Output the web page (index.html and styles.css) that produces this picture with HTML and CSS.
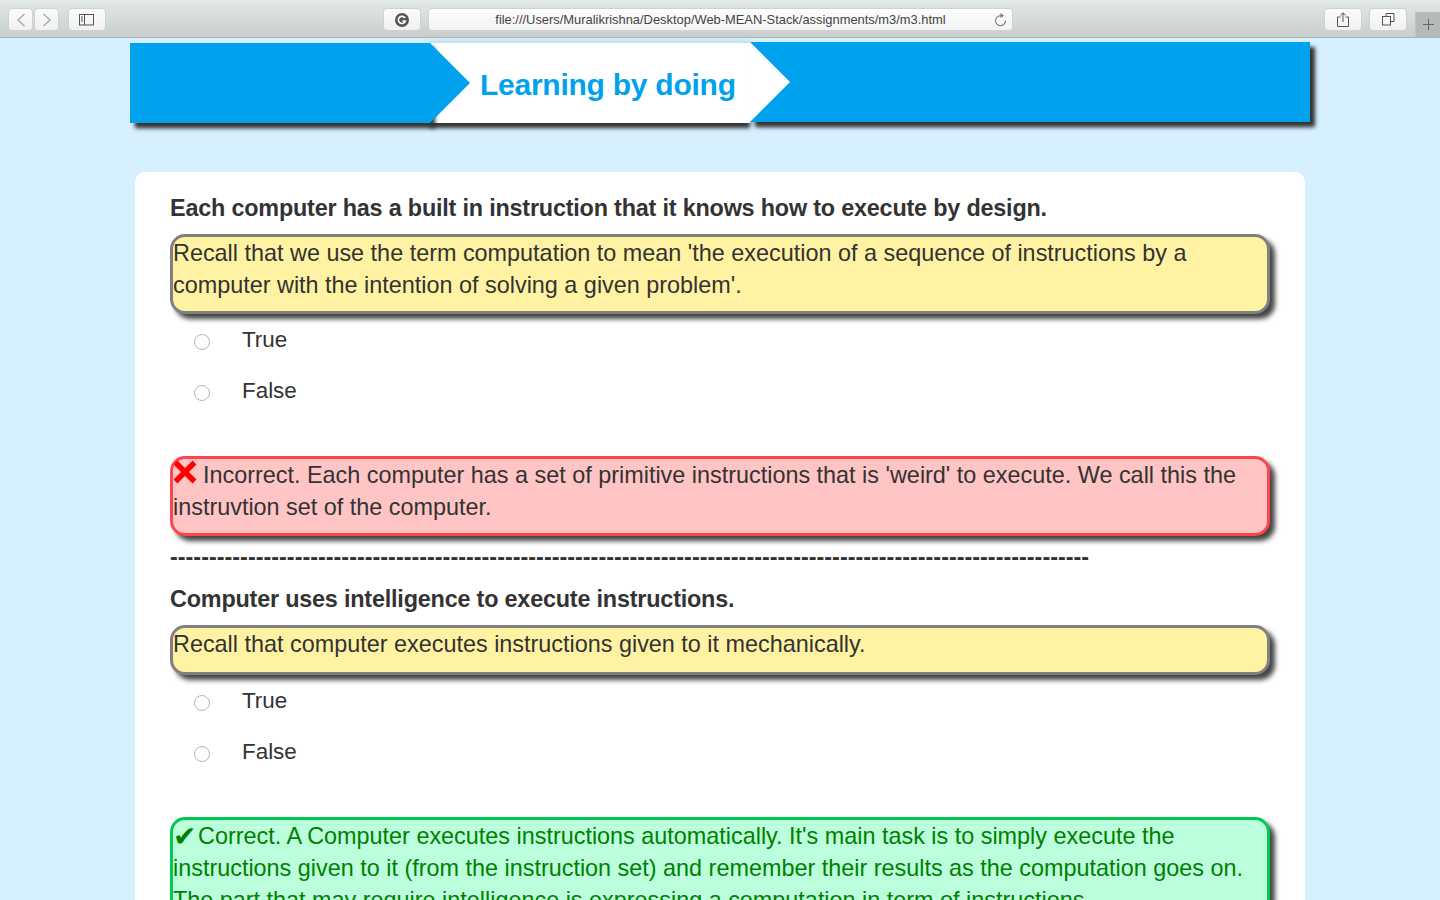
FILE: index.html
```html
<!DOCTYPE html>
<html>
<head lang="en">
    <meta charset="UTF-8">
    <title>Learning by doing</title>
    <link rel="stylesheet" href="styles.css">
</head>
<body>
    <div class="toolbar">
        <div class="tool-group">
            <span class="tool-btn nav-btn">
                <svg width="12" height="16" viewBox="0 0 12 16"><path d="M9.5 2 L3 8 L9.5 14" fill="none" stroke="#a9a9a9" stroke-width="1.4"/></svg>
            </span>
            <span class="tool-btn nav-btn">
                <svg width="12" height="16" viewBox="0 0 12 16"><path d="M2.5 2 L9 8 L2.5 14" fill="none" stroke="#a9a9a9" stroke-width="1.4"/></svg>
            </span>
        </div>
        <span class="tool-btn wide-btn sidebar-btn">
            <svg width="16" height="12" viewBox="0 0 16 12"><rect x="0.5" y="0.5" width="14" height="10.5" fill="none" stroke="#555" stroke-width="1"/><path d="M5.5 0.5 V11" stroke="#555" stroke-width="1"/><path d="M2 3 H4 M2 5 H4 M2 7 H4" stroke="#555" stroke-width="1"/></svg>
        </span>
        <span class="tool-btn wide-btn grammarly-btn">
            <svg width="14" height="14" viewBox="0 0 14 14"><circle cx="7" cy="7" r="7" fill="#555"/><path d="M10 5 A3.6 3.6 0 1 0 10.4 8 H7.4" fill="none" stroke="#fff" stroke-width="1.6"/></svg>
        </span>
        <div class="url-bar">
            <span class="url-text">file:///Users/Muralikrishna/Desktop/Web-MEAN-Stack/assignments/m3/m3.html</span>
            <svg class="reload" width="13" height="14" viewBox="0 0 13 14"><path d="M7.5 2.8 A5 5 0 1 0 11.5 7.5" fill="none" stroke="#777" stroke-width="1.1"/><path d="M6.5 0 L10 2.8 L6.5 5 Z" fill="#777"/></svg>
        </div>
        <span class="tool-btn wide-btn share-btn">
            <svg width="12" height="15" viewBox="0 0 12 15"><path d="M3.5 5 H0.5 V14.5 H11.5 V5 H8.5" fill="none" stroke="#555" stroke-width="1"/><path d="M6 10 V1 M3.5 3.2 L6 0.8 L8.5 3.2" fill="none" stroke="#555" stroke-width="1"/></svg>
        </span>
        <span class="tool-btn wide-btn tabs-btn">
            <svg width="13" height="13" viewBox="0 0 13 13"><rect x="0.5" y="3.5" width="8" height="8.5" fill="none" stroke="#555" stroke-width="1"/><path d="M4 3 V0.5 H12 V8.5 H9" fill="none" stroke="#555" stroke-width="1"/></svg>
        </span>
        <span class="new-tab">
            <svg width="11" height="11" viewBox="0 0 11 11"><path d="M5.5 0 V11 M0 5.5 H11" stroke="#666" stroke-width="1"/></svg>
        </span>
    </div>

    <div class="page">
        <div class="banner">
            <div class="ribbon ribbon-left"></div>
            <h1 class="banner-title">Learning by doing</h1>
            <div class="ribbon ribbon-right"></div>
        </div>

        <div class="card">
            <p class="question">Each computer has a built in instruction that it knows how to execute by design.</p>
            <div class="note hint">Recall that we use the term computation to mean 'the execution of a sequence of instructions by a computer with the intention of solving a given problem'.</div>
            <ul class="options">
                <li><span class="radio"></span><span>True</span></li>
                <li><span class="radio"></span><span>False</span></li>
            </ul>
            <div class="note wrong"><svg class="cross" width="24" height="24" viewBox="0 0 24 24"><path d="M2.5 2.5 L21.5 21.5 M21.5 2.5 L2.5 21.5" stroke="#f00" stroke-width="5.5"/></svg>Incorrect. Each computer has a set of primitive instructions that is 'weird' to execute. We call this the instruvtion set of the computer.</div>
            <div class="divider">----------------------------------------------------------------------------------------------------------------------</div>
            <p class="question">Computer uses intelligence to execute instructions.</p>
            <div class="note hint hint-short">Recall that computer executes instructions given to it mechanically.</div>
            <ul class="options">
                <li><span class="radio"></span><span>True</span></li>
                <li><span class="radio"></span><span>False</span></li>
            </ul>
            <div class="note right"><span class="check">&#10004;</span>Correct. A Computer executes instructions automatically. It's main task is to simply execute the instructions given to it (from the instruction set) and remember their results as the computation goes on. The part that may require intelligence is expressing a computation in term of instructions.</div>
        </div>
    </div>
</body>
</html>
```

FILE: styles.css
```css
* {
    margin: 0;
    padding: 0;
    box-sizing: border-box;
}
html, body {
    height: 900px;
    overflow: hidden;
}
body {
    background: #d6f0ff;
    font-family: "Liberation Sans", Arial, sans-serif;
    color: #333;
}

/* browser chrome */
.toolbar {
    height: 38px;
    display: flex;
    align-items: flex-start;
    padding-top: 8px;
    padding-left: 8px;
    background: linear-gradient(#e6eaea, #dfe5e5 15%, #c8cece);
    border-bottom: 1px solid #aeb2b2;
    position: relative;
}
.tool-group {
    display: flex;
    gap: 1px;
}
.tool-btn {
    height: 23px;
    display: flex;
    align-items: center;
    justify-content: center;
    background: linear-gradient(#fbfbfb, #f1f1f1);
    border: 1px solid #cfd2d2;
    border-radius: 4px;
}
.nav-btn {
    width: 25px;
}
.wide-btn {
    width: 38px;
}
.sidebar-btn {
    margin-left: 9px;
}
.grammarly-btn {
    margin-left: 277px;
}
.url-bar {
    width: 585px;
    height: 23px;
    margin-left: 7px;
    display: flex;
    align-items: center;
    justify-content: center;
    position: relative;
    background: linear-gradient(#fdfdfd, #f3f3f3);
    border: 1px solid #cfd2d2;
    border-radius: 4px;
}
.url-text {
    font-size: 12.9px;
    color: #444;
}
.reload {
    position: absolute;
    right: 5px;
    top: 4px;
}
.share-btn {
    margin-left: 311px;
}
.tabs-btn {
    margin-left: 7px;
}
.new-tab {
    position: absolute;
    right: 0;
    top: 12px;
    width: 25px;
    height: 25px;
    display: flex;
    align-items: center;
    justify-content: center;
    background: #b4b9b9;
    border-left: 1px solid #c0c4c4;
}

/* page */
.page {
    width: 1180px;
    margin-left: 130px;
}
.banner {
    height: 80px;
    margin-top: 5px;
    display: flex;
}
.ribbon {
    height: 80px;
    position: relative;
    background: #00a2ed;
    box-shadow: 5px 5px 4px #333, 4px 7px 6px -3px rgba(0, 0, 0, .25);
}
.ribbon-left {
    width: 300px;
    z-index: 1;
}
/* arrow tip, sits over the white part */
.ribbon-left::after {
    content: "";
    position: absolute;
    left: 100%;
    top: 0;
    border-left: 40px solid #00a2ed;
    border-top: 40px solid transparent;
    border-bottom: 40px solid transparent;
}
.ribbon-right {
    width: 560px;
    margin-top: -1px;
}
.ribbon-right::before {
    content: "";
    position: absolute;
    left: 0;
    top: 0;
    border-left: 40px solid #fff;
    border-top: 40px solid transparent;
    border-bottom: 40px solid transparent;
}
.banner-title {
    width: 320px;
    height: 80px;
    background: #fff;
    box-shadow: 0 5px 4px #333, 0 1px 8px rgba(0, 0, 0, .2);
    font-size: 30px;
    letter-spacing: -0.25px;
    line-height: 84px;
    font-weight: bold;
    color: #00a2ed;
    padding-left: 50px;
    white-space: nowrap;
}
.card {
    width: 1170px;
    margin-left: 5px;
    margin-top: 49px;
    padding: 20px 35px;
    background: #fff;
    border-radius: 10px;
    height: 800px;
    font-size: 23.4px;
    line-height: 32px;
}
.question {
    font-weight: bold;
    letter-spacing: -0.2px;
}
.note {
    border: 3px solid;
    border-radius: 15px;
    padding-bottom: 10px;
    box-shadow: 5px 5px 5px #444;
}
.hint {
    margin-top: 10px;
    background: #fff2a3;
    border-color: #808080;
}
.hint-short {
    padding-bottom: 12px;
}
.wrong {
    background: #ffc4c4;
    border-color: #ff4451;
}
.right {
    background: #bbffdd;
    border-color: #00c853;
    color: #008000;
}
.cross {
    vertical-align: -1px;
    margin-right: 6px;
}
.check {
    font-size: 28px;
    line-height: 20px;
    margin-right: 2px;
    vertical-align: -2px;
}
.options {
    list-style: none;
    padding-left: 24px;
    margin-top: 10px;
    margin-bottom: 30px;
    font-size: 22.4px;
}
.options li {
    height: 51px;
    display: flex;
    align-items: flex-start;
}
.radio {
    width: 16px;
    height: 16px;
    margin-top: 10px;
    margin-right: 32px;
    border: 1px solid #b5b5b5;
    border-radius: 50%;
    background: #fff;
}
.divider {
    font-weight: bold;
    margin-top: 5px;
    margin-bottom: 10px;
    white-space: nowrap;
}
```
